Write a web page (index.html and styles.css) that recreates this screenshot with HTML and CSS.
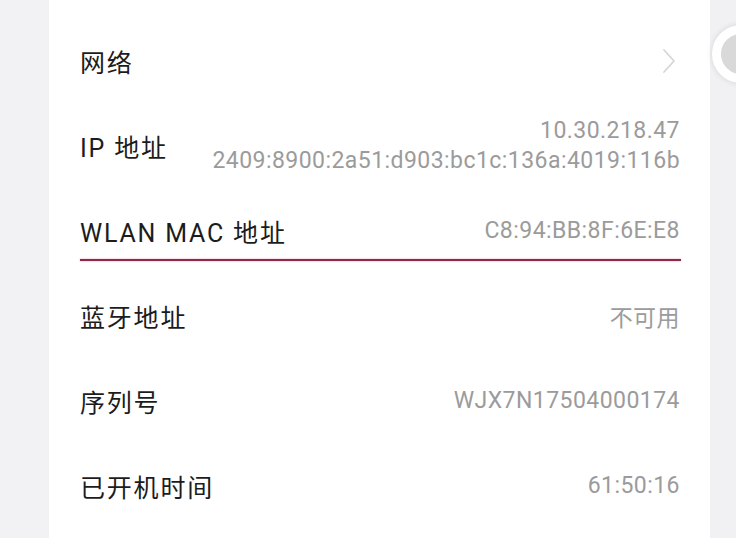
FILE: index.html
```html
<!DOCTYPE html>
<html lang="zh-CN">
<head>
<meta charset="utf-8">
<link rel="stylesheet" href="styles.css">
</head>
<body>
<div class="screen">
  <div class="panel">
    <div class="row">
      <span class="label">网络</span>
      <svg class="chev" width="14" height="26" viewBox="0 0 14 26"><path d="M2 2 L12 13 L2 24" fill="none" stroke="#d6d6d6" stroke-width="1.8" stroke-linecap="round" stroke-linejoin="round"/></svg>
    </div>
    <div class="row">
      <span class="label">IP 地址</span>
      <div class="values">
        <span class="value">10.30.218.47</span>
        <span class="value">2409:8900:2a51:d903:bc1c:136a:4019:116b</span>
      </div>
    </div>
    <div class="row focused">
      <span class="label">WLAN MAC 地址</span>
      <span class="value">C8:94:BB:8F:6E:E8</span>
    </div>
    <div class="row">
      <span class="label">蓝牙地址</span>
      <span class="value">不可用</span>
    </div>
    <div class="row">
      <span class="label">序列号</span>
      <span class="value">WJX7N17504000174</span>
    </div>
    <div class="row">
      <span class="label">已开机时间</span>
      <span class="value">61:50:16</span>
    </div>
  </div>
  <div class="side"></div>
  <div class="ring"></div>
</div>
</body>
</html>
```

FILE: styles.css
```css
html, body {
  margin: 0;
  padding: 0;
  width: 736px;
  height: 538px;
  overflow: hidden;
  background: #f2f1f3;
  font-family: Roboto, "Noto Sans CJK SC", sans-serif;
}

.screen {
  position: relative;
  display: flex;
  width: 736px;
  height: 538px;
}

.panel {
  width: 661px;
  margin-left: 49px;
  background: #ffffff;
  padding: 18px 30px 0 31px;
  box-sizing: border-box;
  display: flex;
  flex-direction: column;
}

.row {
  height: 85px;
  display: flex;
  align-items: center;
  justify-content: space-between;
  position: relative;
}

.focused::after {
  content: "";
  position: absolute;
  left: 0;
  right: -1px;
  top: 71px;
  height: 2px;
  background: #8e2a48;
  box-shadow: 0 0 2px rgba(210, 90, 130, 0.6);
}

.label {
  font-size: 25px;
  letter-spacing: 1.8px;
  color: #1c1c1c;
  white-space: nowrap;
}

.values {
  display: flex;
  flex-direction: column;
  align-items: flex-end;
  gap: 3px;
}

.value {
  font-size: 23px;
  color: #9b9b9b;
  letter-spacing: 0.45px;
  white-space: nowrap;
}

.chev {
  margin-right: 4px;
}

.side {
  flex: 1;
  background: #f1f0f2;
}

.ring {
  position: absolute;
  left: 712px;
  top: 25px;
  width: 40px;
  height: 40px;
  border-radius: 50%;
  border: 9px solid #ffffff;
  background: #d9d9d9;
  box-shadow: 0 0 6px rgba(0, 0, 0, 0.12);
}
```
